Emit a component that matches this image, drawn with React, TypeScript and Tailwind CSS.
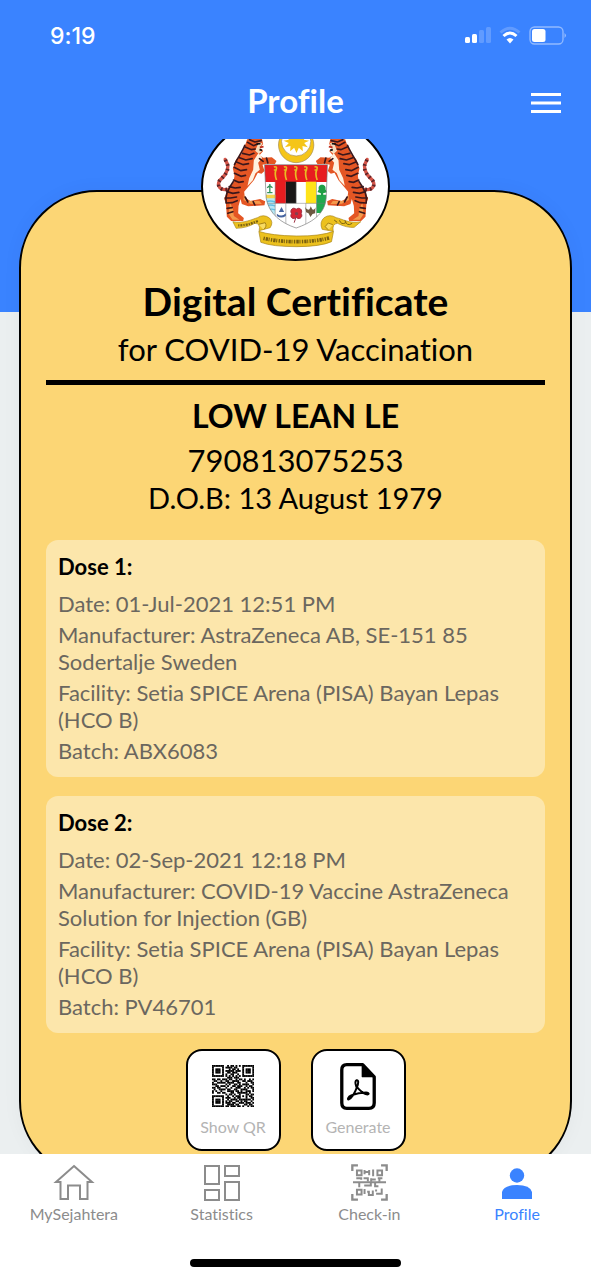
import React from "react";

const QR_ROWS = [
  "1111111001011010101111111",
  "1000001011110110001000001",
  "1011101000101101001011101",
  "1011101011111011101011101",
  "1011101001101110001011101",
  "1000001010011001001000001",
  "1111111010101010101111111",
  "0000000001110111000000000",
  "1101101110110010110100101",
  "0110010011001111001101110",
  "1001111101111001100010011",
  "1110000010100110101111001",
  "0011011101001101110010110",
  "1101100010010011100101011",
  "0100111101100110011110001",
  "1010010001111011010011101",
  "1001101100011001111110100",
  "0000000010110100100011011",
  "1111111001001011101010110",
  "1000001011100101100010011",
  "1011101001011110111111101",
  "1011101010110011010110010",
  "1011101011101100111011101",
  "1000001001111011000110110",
  "1111111011011101101001011",
];

function QrCode() {
  return (
    <svg viewBox="0 0 25 25" className="size-[42px]" aria-hidden="true">
      {QR_ROWS.flatMap((row, y) =>
        row.split("").map((c, x) =>
          c === "1" ? <rect key={`${x}-${y}`} x={x} y={y} width="1.1" height="1.1" /> : null
        )
      )}
    </svg>
  );
}

function PdfIcon() {
  return (
    <svg viewBox="0 0 108 142" className="h-[47px] w-9" fill="none" stroke="#000" aria-hidden="true">
      <path d="M20 5H68L103 42V121Q103 137 87 137H20Q5 137 5 121V21Q5 5 20 5Z" strokeWidth="10" strokeLinejoin="round" />
      <path d="M66 3V42H105Z" fill="#000" strokeWidth="2" />
      <path
        d="M50 52C42 56 47 67 50 75C44 91 35 105 26 110C21 112 24 101 33 98C46 93 61 89 78 89C91 91 87 97 77 94C67 90 57 80 51 73C55 63 57 51 50 52Z"
        strokeWidth="6"
        strokeLinejoin="round"
      />
    </svg>
  );
}

function Tiger() {
  return (
    <g>
      <path d="M110 178C88 182 78 166 88 151C100 139 113 127 112 108C111 99 105 92 104 88" fill="none" stroke="#d5564a" strokeWidth="10" strokeLinecap="round" />
      <path d="M110 178C88 182 78 166 88 151C100 139 113 127 112 108C111 99 105 92 104 88" fill="none" stroke="#5c2427" strokeWidth="11" strokeDasharray="5 9" />
      <path
        d="M170 28L214 25L218 42L209 53L218 63L207 76L218 83L244 82L258 93L253 103L230 101L216 104L222 123L213 131L202 128L190 151L176 167L161 185L163 203L180 213L209 207L224 214L222 226L173 229L154 222L150 207L144 228L143 250L160 264L158 273L122 273L109 260L106 218L101 207L111 181L128 159L132 138L127 115L137 88L153 72L163 48Z"
        fill="#e45624"
      />
      <path d="M204 69L215 84L203 98L208 119L195 130L187 151L171 168L176 145L188 119L190 91Z" fill="#fff1df" />
      <path d="M205 37L216 40L209 52L216 62L205 72L194 62Z" fill="#f6ddbf" />
      <path d="M160 194L172 212L207 213L214 222L180 221L159 210Z" fill="#f49a4c" />
      <path d="M118 218L127 234L130 258L147 269L126 269L115 253Z" fill="#f49a4c" />
      <g fill="none" stroke="#3b171b" strokeWidth="5" strokeLinecap="round">
        <path d="M171 37L189 47L200 43M164 51L183 59L194 57M156 70L177 75L190 70M147 83L166 90L185 86" />
        <path d="M138 96L158 104L174 101M131 112L151 122L168 119M132 130L152 139L165 136M129 150L145 157L158 155" />
        <path d="M116 170L134 174L149 172M109 185L127 190L145 187M104 204L120 204L138 201M107 219L125 218L140 212" />
        <path d="M110 235L125 233M112 250L127 245M177 29L193 36L212 32M207 86L218 94M228 84L232 99M164 201L172 216M188 215L193 225" />
        <path d="M163 46C155 68 140 84 132 104M128 155C112 177 102 197 107 218" />
      </g>
      <path d="M198 42L210 41M207 59L215 61" stroke="#111" strokeWidth="5" />
      <path d="M208 52L219 50" stroke="#bd2d1e" strokeWidth="5" />
    </g>
  );
}

function CoatOfArms() {
  return (
    <svg viewBox="39 -48 552 435" className="size-full" role="img" aria-label="Coat of arms of Malaysia">
      <defs>
        <clipPath id="shield">
          <path d="M222 104H411L407 204C403 255 360 279 317 294C272 279 235 252 227 204Z" />
        </clipPath>
      </defs>
      <circle cx="317" cy="45" r="53" fill="#f5c519" stroke="#a38a4d" strokeWidth="2" />
      <circle cx="317" cy="34" r="44" fill="#fff" stroke="#a38a4d" strokeWidth="2" />
      <path
        d="M317 0L322 17L334 4L333 21L349 15L340 29L356 32L341 39L352 52L336 48L337 64L325 53L318 69L311 53L299 64L300 48L283 52L295 39L279 32L295 29L286 15L302 21L300 4L313 17Z"
        fill="#f5c519"
      />
      <Tiger />
      <g transform="matrix(-1 0 0 1 634 0)">
        <Tiger />
      </g>
      <g clipPath="url(#shield)">
        <rect x="220" y="100" width="195" height="200" fill="#fff" />
        <rect x="220" y="102" width="195" height="54" fill="#e71d20" />
        <rect x="254" y="155" width="32" height="65" fill="#e71d20" />
        <rect x="286" y="155" width="31" height="65" fill="#191617" />
        <rect x="346" y="155" width="31" height="65" fill="#ffe319" />
        <path d="M222 194H254V253H227Z" fill="#b9e8f5" />
        <path d="M222 194H254V205H222Z" fill="#f4d34b" />
        <path d="M228 216Q237 210 254 216M228 228Q239 222 254 228M234 240Q242 235 254 240" stroke="#62bfe3" strokeWidth="4" fill="none" />
        <path d="M378 194H411V249H378Z" fill="#21a94e" />
        <path d="M254 155V266M286 220V285M346 220V284M378 155V262M317 156V220M228 220H407" stroke="#777" strokeWidth="1.5" />
      </g>
      <g fill="none" stroke="#e8bc22" strokeWidth="5">
        {[254, 284, 315, 345, 376].map((x) => (
          <path key={x} d={`M${x - 4} 111Q${x + 7} 108 ${x + 3} 119Q${x - 3} 131 ${x + 4} 150M${x - 4} 120H${x + 5}`} />
        ))}
      </g>
      <path d="M238 162V187M230 173L238 167L246 173M230 188H246" stroke="#31925b" strokeWidth="4" fill="none" />
      <path d="M395 164C388 163 382 170 385 178L381 186L391 190L392 198H398V190L409 187L405 178C407 169 401 164 395 164Z" fill="#1f9e46" />
      <path d="M259 251Q273 263 286 250V258Q272 267 259 258ZM265 246L273 231L281 246ZM263 248H284" fill="#46649f" />
      <path d="M317 238C307 229 297 240 303 251C296 263 310 270 317 262C327 272 339 259 332 251C338 239 326 230 317 238ZM317 260L311 278" fill="#d72634" stroke="#9e3144" strokeWidth="3" />
      <circle cx="318" cy="251" r="5" fill="#85404e" />
      <path d="M344 231Q350 242 357 238L361 229L365 238Q372 242 375 232L374 250L366 252L360 261L354 250L347 247Z" fill="#6c5841" />
      <path d="M222 104H411L407 204C403 255 360 279 317 294C272 279 235 252 227 204Z" fill="none" stroke="#777" strokeWidth="2" />
      <g fill="#ecc11e" stroke="#a78417" strokeWidth="2">
        <path d="M127 275C159 282 187 267 201 263Q219 251 237 264Q250 276 239 293L206 302Q211 280 193 280Q169 294 137 295Z" />
        <path d="M511 275C478 282 453 266 437 263Q418 251 401 263Q386 276 395 298L428 304Q424 281 441 280Q469 294 491 292Z" />
        <path d="M205 304Q243 317 317 318Q390 319 429 304L423 335Q390 350 317 350Q245 350 211 337Z" />
      </g>
      <path d="M204 283L224 278Q231 289 219 299M427 284L413 279L404 290L414 300" fill="#f8db62" stroke="#a78417" strokeWidth="3" />
      <g fill="none" stroke="#7a6010" strokeWidth="5">
        <path d="M219 325Q264 335 317 335Q374 335 416 324" strokeWidth="11" strokeDasharray="4 3 7 2 3 4" />
        <path d="M143 286Q169 287 202 273" strokeWidth="7" strokeDasharray="4 3 6 3" />
        <path d="M431 270L440 277M447 271Q452 286 466 278M463 271Q469 291 485 280" strokeWidth="3" />
      </g>
    </svg>
  );
}

type Dose = { title: string; lines: string[] };

const DOSES: Dose[] = [
  {
    title: "Dose 1:",
    lines: [
      "Date: 01-Jul-2021 12:51 PM",
      "Manufacturer: AstraZeneca AB, SE-151 85\nSodertalje Sweden",
      "Facility: Setia SPICE Arena (PISA) Bayan Lepas\n(HCO B)",
      "Batch: ABX6083",
    ],
  },
  {
    title: "Dose 2:",
    lines: [
      "Date: 02-Sep-2021 12:18 PM",
      "Manufacturer: COVID-19 Vaccine AstraZeneca\nSolution for Injection (GB)",
      "Facility: Setia SPICE Arena (PISA) Bayan Lepas\n(HCO B)",
      "Batch: PV46701",
    ],
  },
];

function DoseCard({ dose }: { dose: Dose }) {
  return (
    <section className="rounded-xl bg-[#fce6ab] px-3 pt-[13px] pb-[13px]">
      <h3 className="mb-2.5 text-[22px] leading-[27px] font-bold">{dose.title}</h3>
      <div className="flex flex-col gap-1 text-[22px] leading-[27px] text-[#6b675f]">
        {dose.lines.map((line) => (
          <p key={line} className="whitespace-pre-line">{line}</p>
        ))}
      </div>
    </section>
  );
}

function ActionButton({ label, children }: { label: string; children: React.ReactNode }) {
  return (
    <button type="button" className="flex h-[102px] w-[95px] flex-col items-center rounded-2xl border-2 border-black bg-white pt-[11px]">
      <span className="flex h-12 items-center">{children}</span>
      <span className="mt-[7px] text-base leading-5 text-[#b4b4b4]">{label}</span>
    </button>
  );
}

function StatusBar() {
  return (
    <div className="flex h-[70px] items-center justify-between pr-6 pl-[50px]">
      <span className="pt-0.5 font-['Inter'] text-[23px] leading-7 font-medium">9:19</span>
      <div className="flex items-center gap-2">
        <svg viewBox="0 0 27 18" className="h-[18px] w-[27px]" fill="#fff" aria-hidden="true">
          <rect x="1" y="11" width="5" height="6" rx="1.5" />
          <rect x="8" y="8" width="5" height="9" rx="1.5" />
          <rect x="15" y="4" width="5" height="13" rx="1.5" opacity=".2" />
          <rect x="22" y="1" width="5" height="16" rx="1.5" opacity=".2" />
        </svg>
        <svg viewBox="0 0 22 18" className="h-[18px] w-[22px]" fill="none" aria-hidden="true">
          <path d="M1.500 6.500Q11-2 20.500 6.500" stroke="#fff" strokeWidth="3" opacity=".2" />
          <path d="M4.500 10Q11 4 17.500 10" stroke="#fff" strokeWidth="3" />
          <path d="M7.500 13.500Q11 10.500 14.500 13.500L11 17.500Z" fill="#fff" />
        </svg>
        <svg viewBox="0 0 38 19" className="h-[19px] w-[38px]" fill="none" aria-hidden="true">
          <rect x="1" y="1" width="33" height="17" rx="4.500" stroke="#fff" strokeWidth="1.3" opacity=".45" />
          <rect x="3" y="3" width="13.500" height="13" rx="2.500" fill="#fff" />
          <path d="M35.500 7Q38.500 9.500 35.500 12Z" fill="#fff" opacity=".45" />
        </svg>
      </div>
    </div>
  );
}

function HomeIcon() {
  return (
    <svg viewBox="0 0 42 37" className="h-[37px] w-[42px]" fill="none" stroke="currentColor" strokeWidth="2" aria-hidden="true">
      <path d="M21 2L39 18H34.500V35H27V21.500H15V35H7.500V18H3Z" />
    </svg>
  );
}

function StatsIcon() {
  return (
    <svg viewBox="0 0 36 37" className="h-[37px] w-9" fill="none" stroke="currentColor" strokeWidth="2" aria-hidden="true">
      <path d="M1 2H15V20H1ZM21 2H35V12H21ZM1 26H15V36H1ZM21 18H35V36H21Z" />
    </svg>
  );
}

function ScanIcon() {
  return (
    <svg viewBox="0 0 112 112" className="size-[37px]" fill="none" stroke="currentColor" strokeWidth="7" aria-hidden="true">
      <path d="M4 21V4H21M91 4H108V21M108 91V108H91M21 108H4V91" />
      <path d="M6 55H106" strokeWidth="6" />
      <path d="M18 20H32V34H18ZM80 20H94V34H80ZM18 78H32V92H18Z" strokeWidth="6" />
      <path d="M41 18V31M41 24H55M55 18V34M67 17V37M16 43H31V48M38 43H51V53M61 43V54M61 47H75M81 43H95M86 43V54M25 56V70M40 65H60V55M73 55V67H83M41 76V91M49 84H57M54 84V94H66V80M76 77V83M76 90H93V74" strokeWidth="6" />
    </svg>
  );
}

function PersonIcon() {
  return (
    <svg viewBox="0 0 30 37" className="h-[37px] w-[30px]" fill="currentColor" aria-hidden="true">
      <circle cx="15" cy="11.5" r="7.2" />
      <path d="M0 35V28Q2 21 15 21T30 28V35Z" />
    </svg>
  );
}

const TABS = [
  { label: "MySejahtera", Icon: HomeIcon, active: false },
  { label: "Statistics", Icon: StatsIcon, active: false },
  { label: "Check-in", Icon: ScanIcon, active: false },
  { label: "Profile", Icon: PersonIcon, active: true },
];

export default function App() {
  return (
    <div className="flex h-screen flex-col bg-white font-['Lato','Liberation_Sans',sans-serif] text-black [font-variant-ligatures:none]">
      <header className="shrink-0 bg-[#3a83ff] pb-4 text-white">
        <StatusBar />
        <div className="grid h-[53px] grid-cols-[1fr_auto_1fr] items-center px-7">
          <h1 className="col-start-2 pt-1.5 text-[33px] leading-10 font-bold">Profile</h1>
          <button type="button" aria-label="Menu" className="justify-self-end pt-3">
            <svg viewBox="0 0 34 24" className="h-6 w-[34px]" stroke="#fff" strokeWidth="3" aria-hidden="true">
              <path d="M2 3.500H32M2 12H32M2 20.500H32" />
            </svg>
          </button>
        </div>
      </header>

      <main className="min-h-0 flex-1 overflow-y-auto bg-[linear-gradient(#3a83ff_173px,#ebeff0_173px)] px-[19px] pt-[51px] [scrollbar-width:none]">
        <article className="rounded-[78px] border-2 border-black bg-[#fcd675] px-[25px] pb-[26px] shadow-[0_0_20px_rgba(0,0,0,0.04)]">
          <div className="mx-auto -mt-20 h-[149px] w-[189px] overflow-hidden rounded-[50%] border-2 border-black bg-white">
            <CoatOfArms />
          </div>
          <div className="border-b-5 border-black pt-4 pb-[11px] text-center">
            <h2 className="text-[39px] leading-[48px] font-bold">Digital Certificate</h2>
            <p className="mt-1 text-[31px] leading-10">for COVID-19 Vaccination</p>
          </div>
          <div className="pt-[11px] text-center">
            <p className="text-[32px] leading-10 font-bold">LOW LEAN LE</p>
            <p className="mt-1 text-[31px] leading-10">790813075253</p>
            <p className="text-[29px] leading-9">D.O.B: 13 August 1979</p>
          </div>
          <div className="mt-6 flex flex-col gap-[19px]">
            {DOSES.map((dose) => (
              <DoseCard key={dose.title} dose={dose} />
            ))}
          </div>
          <div className="mt-4 flex justify-center gap-[30px]">
            <ActionButton label="Show QR"><QrCode /></ActionButton>
            <ActionButton label="Generate"><PdfIcon /></ActionButton>
          </div>
        </article>
      </main>

      <footer className="shrink-0 bg-white">
        <nav className="grid grid-cols-4 pt-2.5">
          {TABS.map(({ label, Icon, active }) => (
            <a
              key={label}
              href="#"
              aria-current={active ? "page" : undefined}
              className={`flex flex-col items-center gap-[3px] text-base leading-5 ${active ? "text-[#3a83ff]" : "text-[#8c8c8c]"}`}
            >
              <Icon />
              {label}
            </a>
          ))}
        </nav>
        <div className="mx-auto mt-[35px] mb-[13px] h-2 w-[211px] rounded-full bg-black" />
      </footer>
    </div>
  );
}
